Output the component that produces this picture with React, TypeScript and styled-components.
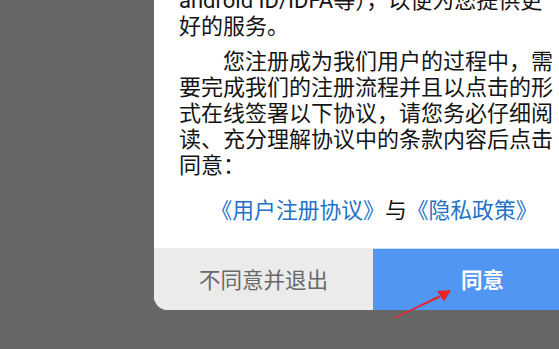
import React from "react";
import styled, { createGlobalStyle } from "styled-components";

const GlobalStyle = createGlobalStyle`
  html, body {
    margin: 0;
    padding: 0;
    background: #676767;
  }
  body {
    font-family: Roboto, "Noto Sans CJK SC", sans-serif;
  }
`;

//画面全体
const Screen = styled.div`
  position: relative;
  width: 559px;
  height: 349px;
  overflow: hidden;
  background: #676767;
`;

//ダイアログ本体
const Dialog = styled.div`
  margin-top: -12px;
  margin-left: 154px;
  width: 438px;
  background: #ffffff;
  border-radius: 0 0 14px 14px;
  overflow: hidden;
  display: flex;
  flex-direction: column;
`;

//本文エリア
const Body = styled.div`
  padding: 0 25px;
  display: flex;
  flex-direction: column;
  gap: 9px;
`;

//段落
const Paragraph = styled.p<{ $indent?: boolean }>`
  margin: 0;
  width: 374px;
  font-size: 22px;
  line-height: 26px;
  color: #141414;
  text-indent: ${(p) => (p.$indent ? "44px" : "0")};
`;

//協議リンク行
const LinkRow = styled.div`
  margin: 19px 0 24px;
  padding-left: 2px;
  text-align: center;
  font-size: 21.8px;
  line-height: 26px;
  color: #141414;
`;

const DocLink = styled.span`
  color: #2471c8;
`;

//ボタン行
const ButtonRow = styled.div`
  display: grid;
  grid-template-columns: 1fr 1fr;
  height: 62px;
`;

const ActionButton = styled.button<{ $primary?: boolean }>`
  border: none;
  margin: 0;
  padding: 0 0 2px;
  font-family: Roboto, "Noto Sans CJK SC", sans-serif;
  font-size: 21.5px;
  font-weight: ${(p) => (p.$primary ? 700 : 400)};
  color: ${(p) => (p.$primary ? "#ffffff" : "#686868")};
  background: ${(p) => (p.$primary ? "#5096f2" : "#ebebeb")};
  box-shadow: ${(p) => (p.$primary ? "inset 0 1px 0 #c9e0fb" : "none")};
`;

//注釈の矢印
const Arrow = styled.svg`
  position: absolute;
  left: 390px;
  top: 283px;
`;

export default function App() {
  return (
    <>
      <GlobalStyle />
      <Screen>
        <Dialog>
          <Body>
            <Paragraph>
              android ID/IDFA等），以便为您提供更
              <br />
              好的服务。
            </Paragraph>
            <Paragraph $indent>
              您注册成为我们用户的过程中，需要完成我们的注册流程并且以点击的形式在线签署以下协议，请您务必仔细阅读、充分理解协议中的条款内容后点击同意：
            </Paragraph>
          </Body>
          <LinkRow>
            <DocLink>《用户注册协议》</DocLink>与<DocLink>《隐私政策》</DocLink>
          </LinkRow>
          <ButtonRow>
            <ActionButton>不同意并退出</ActionButton>
            <ActionButton $primary>同意</ActionButton>
          </ButtonRow>
        </Dialog>
        <Arrow width="66" height="40" viewBox="0 0 66 40">
          <polygon
            points="3,35 49,12.5 50.5,14.5 4,35.8"
            fill="#e8242a"
          />
          <polygon points="61,7 47,8 54,18.5" fill="#e8242a" />
        </Arrow>
      </Screen>
    </>
  );
}
